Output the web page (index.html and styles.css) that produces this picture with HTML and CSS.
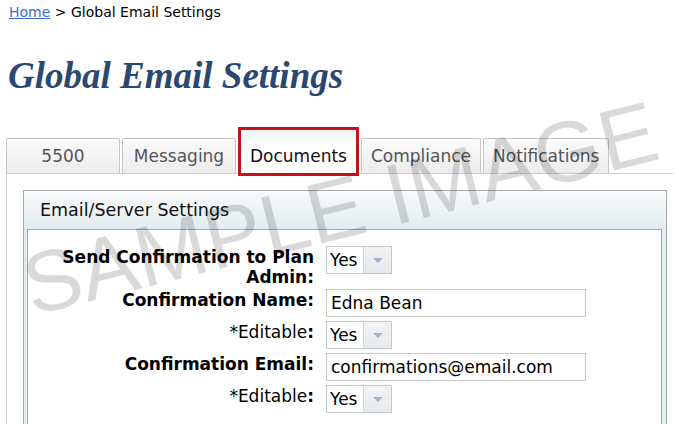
FILE: index.html
```html
<!DOCTYPE html>
<html lang="en">
<head>
<meta charset="utf-8">
<title>Global Email Settings</title>
<link rel="stylesheet" href="styles.css">
</head>
<body>
<div class="page">
  <div class="breadcrumb"><a href="#" class="crumb-link">Home</a> &gt; Global Email Settings</div>
  <h1 class="title">Global Email Settings</h1>

  <div class="tabs">
    <div class="tab">5500</div>
    <div class="tab">Messaging</div>
    <div class="tab tab-active">Documents</div>
    <div class="tab">Compliance</div>
    <div class="tab">Notifications</div>
  </div>

  <div class="tab-content">
    <div class="panel">
      <div class="panel-header">Email/Server Settings</div>
      <div class="panel-frame">
        <div class="panel-body">
          <div class="form">
            <div class="label">Send Confirmation to Plan Admin:</div>
            <div class="control">
              <div class="select"><span class="select-value">Yes</span><span class="select-arrow"><span class="tri"></span></span></div>
            </div>

            <div class="label">Confirmation Name:</div>
            <div class="control"><input class="text-input" type="text" value="Edna Bean"></div>

            <div class="label"><span class="light">*Editable</span>:</div>
            <div class="control">
              <div class="select"><span class="select-value">Yes</span><span class="select-arrow"><span class="tri"></span></span></div>
            </div>

            <div class="label">Confirmation Email:</div>
            <div class="control"><input class="text-input" type="text" value="confirmations@email.com"></div>

            <div class="label"><span class="light">*Editable</span>:</div>
            <div class="control">
              <div class="select"><span class="select-value">Yes</span><span class="select-arrow"><span class="tri"></span></span></div>
            </div>
          </div>
        </div>
      </div>
    </div>
  </div>

  <div class="watermark">SAMPLE IMAGE</div>
</div>
</body>
</html>
```

FILE: styles.css
```css
html, body {
  margin: 0;
  padding: 0;
  background: #ffffff;
}

body {
  font-family: "DejaVu Sans", Verdana, sans-serif;
  color: #000;
  overflow: hidden;
}

.page {
  position: relative;
  padding: 0 6px 0 6px;
  height: 424px;
  overflow: hidden;
}

.breadcrumb {
  padding: 3px 0 0 3px;
  font-size: 14px;
  line-height: 18px;
}

.crumb-link {
  color: #3d6fd6;
  text-decoration: underline;
}

.title {
  margin: 33px 0 0 2px;
  font-family: "Liberation Serif", "Times New Roman", serif;
  font-style: italic;
  font-weight: bold;
  font-size: 37px;
  line-height: 44px;
  color: #2c4870;
}

.tabs {
  margin-top: 29px;
  display: flex;
  align-items: flex-end;
  border-bottom: 1px solid #cfcfcf;
}

.tab {
  box-sizing: border-box;
  min-width: 114px;
  height: 35px;
  padding: 0 9px;
  margin-right: 2px;
  border: 1px solid #c6c6c6;
  border-bottom: none;
  border-radius: 2px 2px 0 0;
  background: linear-gradient(#fbfbfb, #ececec);
  color: #555555;
  font-size: 17px;
  line-height: 34px;
  text-align: center;
  white-space: nowrap;
}

.tab-active {
  height: 49px;
  margin-bottom: -3px;
  padding-top: 9px;
  border: 3px solid #c8101c;
  border-radius: 0;
  background: linear-gradient(#eef4f6, #ffffff 40%);
  color: #111111;
  position: relative;
  z-index: 1;
}

.tab-content {
  border-left: 1px solid #d0d0d0;
  padding: 16px 6px 0 16px;
}

.panel {
  border: 1px solid #a9a9a9;
  background: #e2ecef;
}

.panel-header {
  height: 38px;
  padding-left: 16px;
  font-size: 17.5px;
  line-height: 38px;
  color: #111;
  background: linear-gradient(#f8fafb, #e3ecef);
}

.panel-frame {
  padding: 0 4px 3px 3px;
}

.panel-body {
  border: 1px solid #a9a9a9;
  background: #ffffff;
  padding: 16px 0 20px 0;
}

.form {
  display: grid;
  grid-template-columns: 286px 1fr;
  column-gap: 12px;
  row-gap: 4px;
}

.label {
  text-align: right;
  font-weight: bold;
  font-size: 17px;
  line-height: 19.5px;
  padding-top: 2px;
  margin-bottom: -2px;
}

.light {
  font-weight: normal;
}

.control {
  display: flex;
  align-items: flex-start;
}

.select {
  box-sizing: border-box;
  display: flex;
  width: 66px;
  height: 28px;
  border: 1px solid #c6c6c6;
  background: #fff;
}

.select-value {
  width: 33px;
  padding-left: 3px;
  font-size: 17px;
  line-height: 26px;
}

.select-arrow {
  flex: 1;
  border-left: 1px solid #d4d4d4;
  background: linear-gradient(#f1f3f4, #e6e9eb);
  display: flex;
  align-items: center;
  justify-content: center;
}

.tri {
  width: 0;
  height: 0;
  border-left: 5px solid transparent;
  border-right: 5px solid transparent;
  border-top: 5px solid #9fb4cc;
}

.text-input {
  box-sizing: border-box;
  width: 260px;
  height: 28px;
  margin: 0;
  padding: 0 0 0 4px;
  border: 1px solid #c8c8c8;
  font-family: "DejaVu Sans", Verdana, sans-serif;
  font-size: 17px;
  color: #000;
  background: #fff;
  outline: none;
}

.watermark {
  position: absolute;
  left: 340px;
  top: 208px;
  transform: translate(-50%, -50%) rotate(-14deg);
  font-family: "Liberation Sans", Arial, sans-serif;
  font-size: 86px;
  line-height: 1;
  white-space: nowrap;
  color: rgba(0, 0, 0, 0.15);
  pointer-events: none;
  z-index: 2;
}
```
